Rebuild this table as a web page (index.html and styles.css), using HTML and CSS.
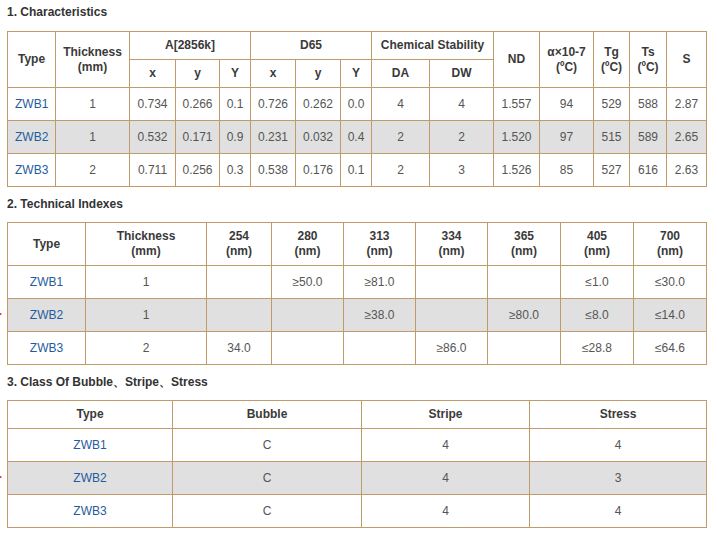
FILE: index.html
```html
<!DOCTYPE html>
<html>
<head>
<meta charset="utf-8">
<link rel="stylesheet" href="styles.css">
</head>
<body>
<h3 class="title first">1. Characteristics</h3>
<table class="spec t1">
  <colgroup>
    <col style="width:48px"><col style="width:74px"><col style="width:46px"><col style="width:44px"><col style="width:31px"><col style="width:45px"><col style="width:45px"><col style="width:31px"><col style="width:58px"><col style="width:64px"><col style="width:46px"><col style="width:54px"><col style="width:36px"><col style="width:37px"><col style="width:40px">
  </colgroup>
  <tr class="h28">
    <th rowspan="2">Type</th>
    <th rowspan="2">Thickness<br>(mm)</th>
    <th colspan="3">A[2856k]</th>
    <th colspan="3">D65</th>
    <th colspan="2">Chemical Stability</th>
    <th rowspan="2">ND</th>
    <th rowspan="2">α×10-7<br>(ºC)</th>
    <th rowspan="2">Tg<br>(ºC)</th>
    <th rowspan="2">Ts<br>(ºC)</th>
    <th rowspan="2">S</th>
  </tr>
  <tr class="h28">
    <th>x</th><th>y</th><th>Y</th><th>x</th><th>y</th><th>Y</th><th>DA</th><th>DW</th>
  </tr>
  <tr>
    <td class="type">ZWB1</td><td>1</td><td>0.734</td><td>0.266</td><td>0.1</td><td>0.726</td><td>0.262</td><td>0.0</td><td>4</td><td>4</td><td>1.557</td><td>94</td><td>529</td><td>588</td><td>2.87</td>
  </tr>
  <tr class="alt">
    <td class="type">ZWB2</td><td>1</td><td>0.532</td><td>0.171</td><td>0.9</td><td>0.231</td><td>0.032</td><td>0.4</td><td>2</td><td>2</td><td>1.520</td><td>97</td><td>515</td><td>589</td><td>2.65</td>
  </tr>
  <tr>
    <td class="type">ZWB3</td><td>2</td><td>0.711</td><td>0.256</td><td>0.3</td><td>0.538</td><td>0.176</td><td>0.1</td><td>2</td><td>3</td><td>1.526</td><td>85</td><td>527</td><td>616</td><td>2.63</td>
  </tr>
</table>

<h3 class="title">2. Technical Indexes</h3>
<table class="spec t2">
  <colgroup>
    <col style="width:78px"><col style="width:121px"><col style="width:65px"><col style="width:72px"><col style="width:72px"><col style="width:72px"><col style="width:73px"><col style="width:73px"><col style="width:73px">
  </colgroup>
  <tr class="h43">
    <th>Type</th>
    <th>Thickness<br>(mm)</th>
    <th>254<br>(nm)</th>
    <th>280<br>(nm)</th>
    <th>313<br>(nm)</th>
    <th>334<br>(nm)</th>
    <th>365<br>(nm)</th>
    <th>405<br>(nm)</th>
    <th>700<br>(nm)</th>
  </tr>
  <tr>
    <td class="type">ZWB1</td><td>1</td><td></td><td>≥50.0</td><td>≥81.0</td><td></td><td></td><td>≤1.0</td><td>≤30.0</td>
  </tr>
  <tr class="alt marked">
    <td class="type">ZWB2</td><td>1</td><td></td><td></td><td>≥38.0</td><td></td><td>≥80.0</td><td>≤8.0</td><td>≤14.0</td>
  </tr>
  <tr>
    <td class="type">ZWB3</td><td>2</td><td>34.0</td><td></td><td></td><td>≥86.0</td><td></td><td>≤28.8</td><td>≤64.6</td>
  </tr>
</table>

<h3 class="title">3. Class Of Bubble、Stripe、Stress</h3>
<table class="spec t3">
  <colgroup>
    <col style="width:165px"><col style="width:189px"><col style="width:168px"><col style="width:177px">
  </colgroup>
  <tr class="h28">
    <th>Type</th><th>Bubble</th><th>Stripe</th><th>Stress</th>
  </tr>
  <tr>
    <td class="type">ZWB1</td><td>C</td><td>4</td><td>4</td>
  </tr>
  <tr class="alt marked">
    <td class="type">ZWB2</td><td>C</td><td>4</td><td>3</td>
  </tr>
  <tr>
    <td class="type">ZWB3</td><td>C</td><td>4</td><td>4</td>
  </tr>
</table>
</body>
</html>
```

FILE: styles.css
```css
html, body {
  margin: 0;
  padding: 0;
  background: #ffffff;
}
body {
  padding: 0 7px;
  font-family: "Liberation Sans", Arial, sans-serif;
  font-size: 12px;
  color: #555555;
}
.title {
  margin: 9px 0 10px 0;
  font-size: 12px;
  line-height: 16px;
  font-weight: bold;
  color: #333333;
}
.title.first {
  margin-top: 4px;
  margin-bottom: 11px;
}
.spec {
  width: 700px;
  table-layout: fixed;
  border-collapse: collapse;
}
.spec th,
.spec td {
  border: 1px solid #c09b68;
  padding: 0;
  text-align: center;
  vertical-align: middle;
  line-height: 15px;
}
.spec th {
  font-weight: bold;
  color: #3a3a3a;
}
.spec td {
  color: #555555;
}
.spec tr {
  height: 33px;
}
.spec tr.h28 {
  height: 28px;
}
.spec tr.h43 {
  height: 43px;
}
.spec tr.alt td {
  background: #e0e0e0;
}
.spec td.type {
  color: #1f5c9e;
}
.t1 td.type {
  text-align: left;
  padding-left: 7px;
}
.spec tr.marked td.type {
  position: relative;
}
.spec tr.marked td.type::before {
  content: "";
  position: absolute;
  left: -9px;
  top: 50%;
  margin-top: -3px;
  width: 0;
  height: 0;
  border-left: 3px solid transparent;
  border-right: 3px solid #e02020;
  border-top: 2px solid transparent;
  border-bottom: 2px solid transparent;
  transform: rotate(180deg);
}
```
